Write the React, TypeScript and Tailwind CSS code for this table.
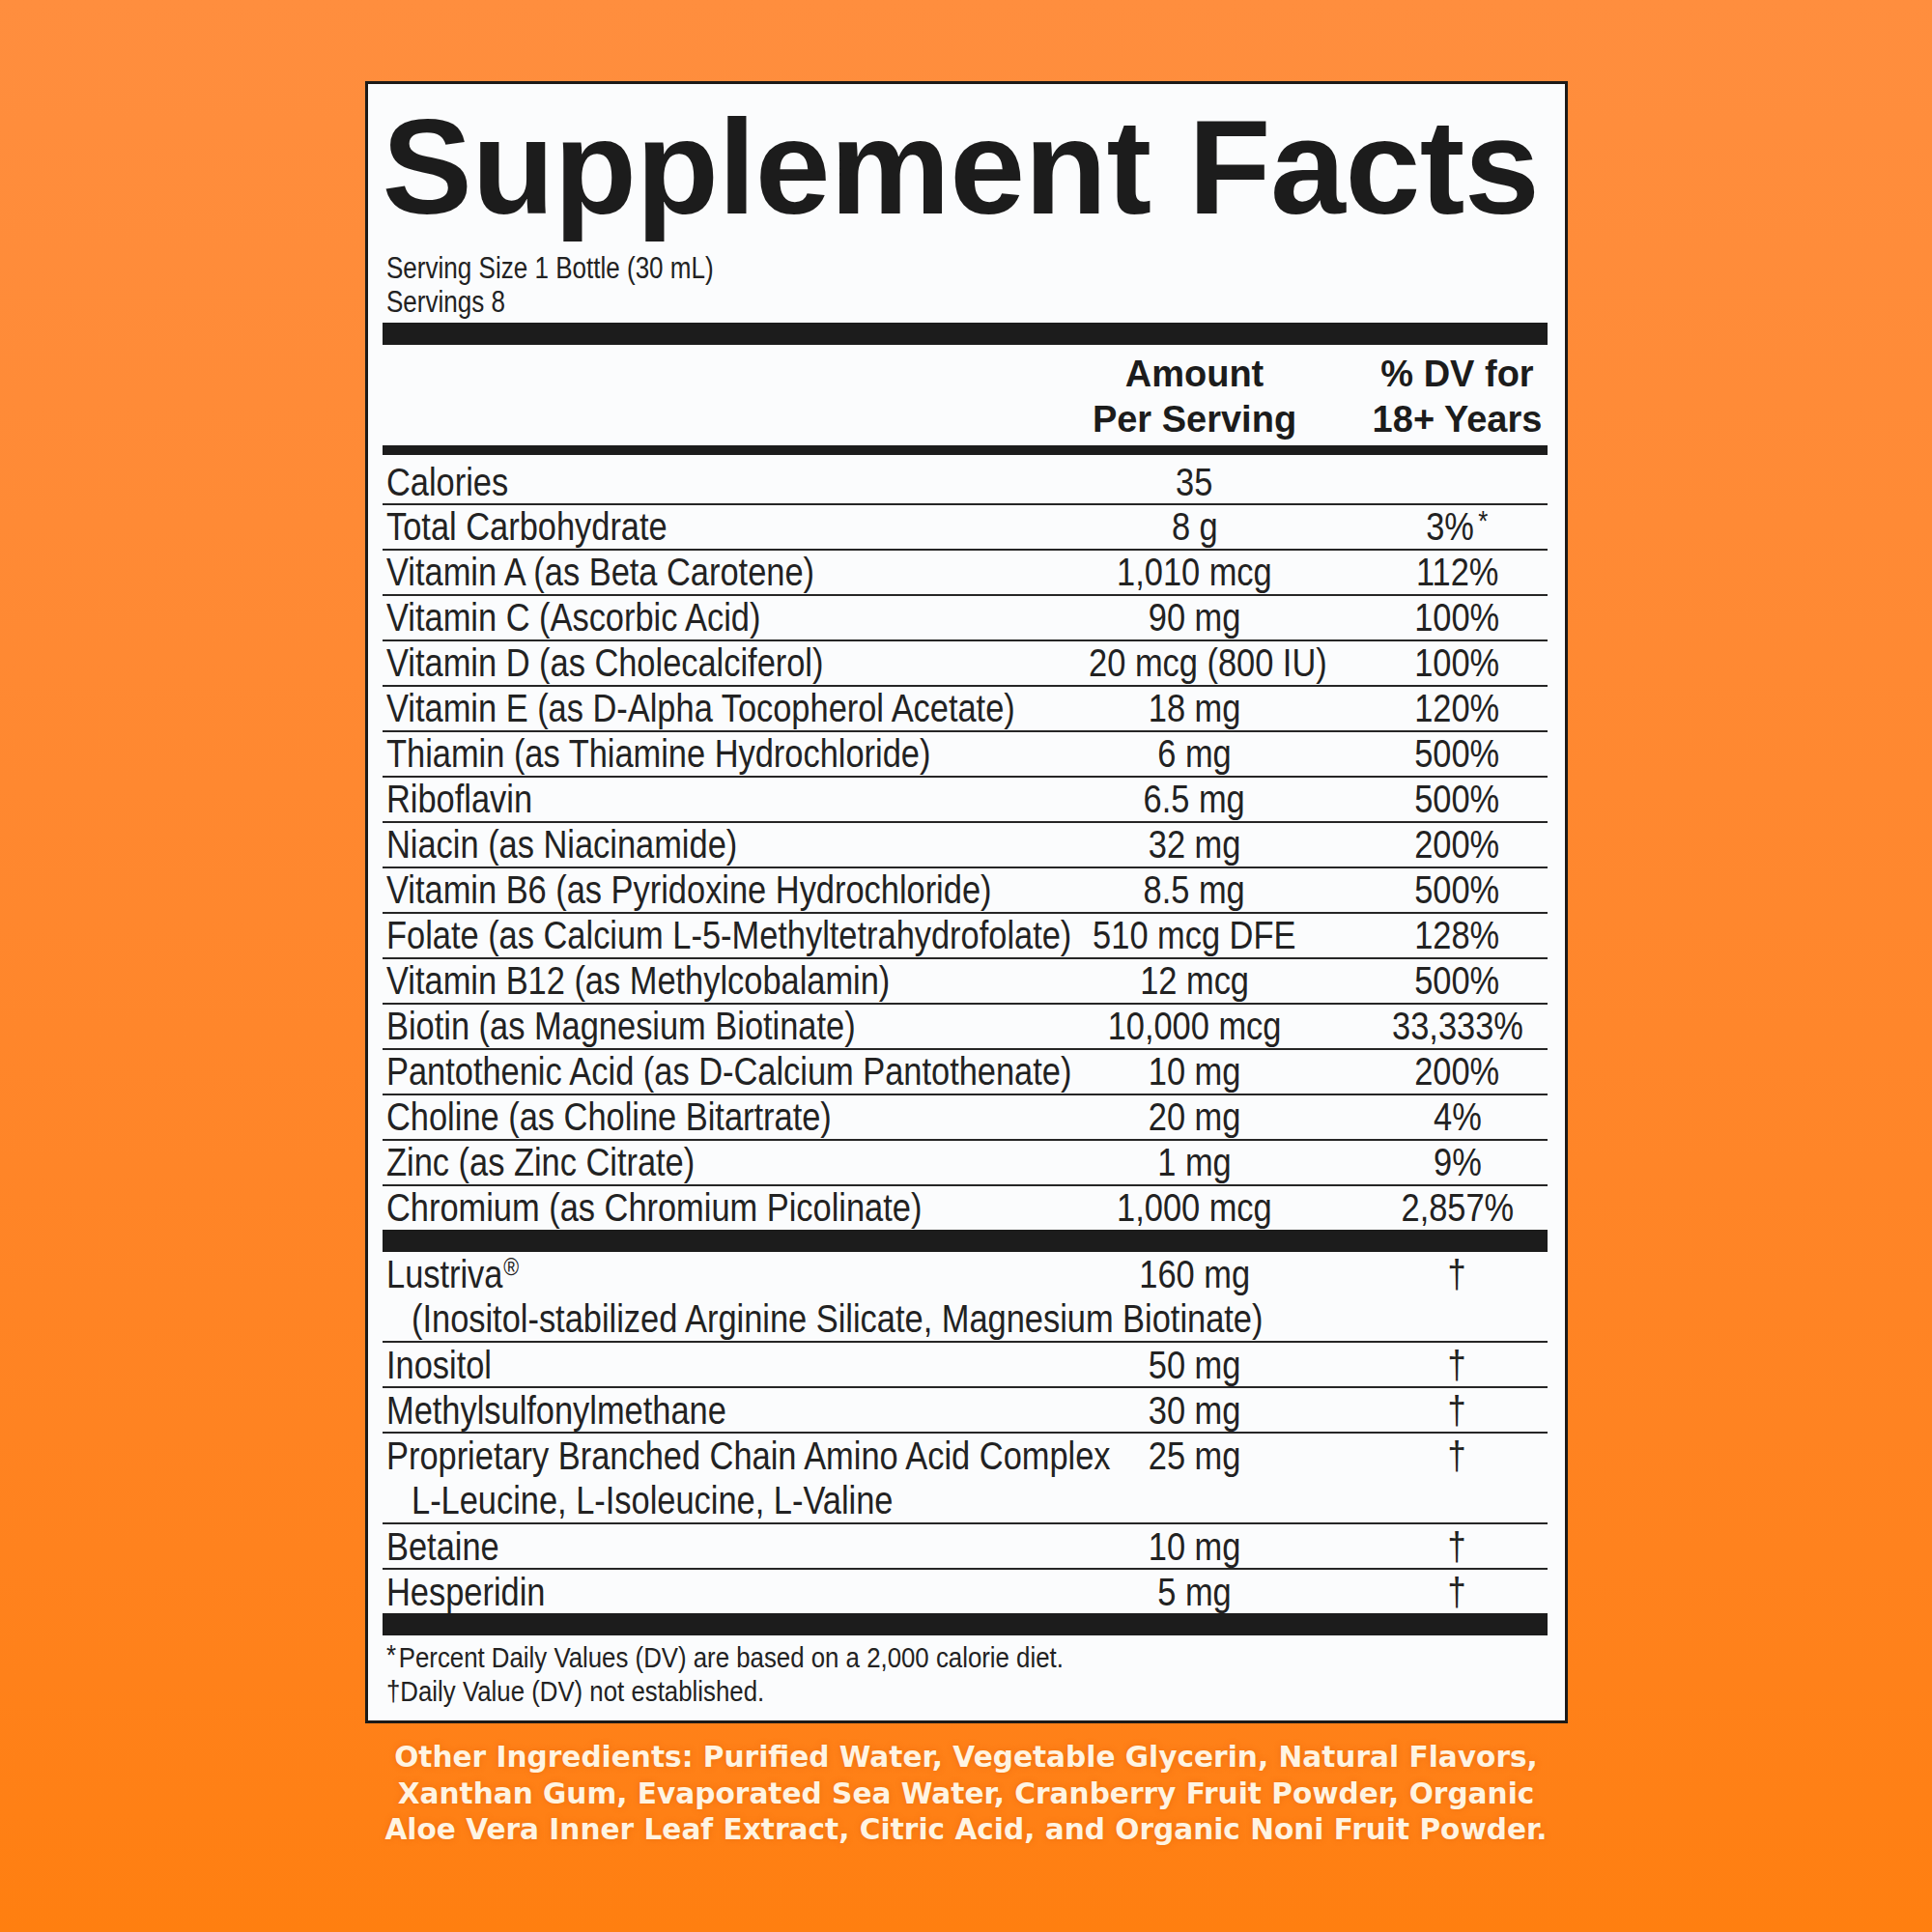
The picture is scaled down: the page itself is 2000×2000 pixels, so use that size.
import clsx from 'clsx';

const SANS = "font-['Liberation_Sans',Arial,sans-serif]";

// the label face is a condensed grotesque; squeeze Liberation Sans to match
function Sq({ children, left, k = 'row' }: { children: React.ReactNode; left?: boolean; k?: 'row' | 'small' | 'serving' }) {
  return (
    <span
      className={clsx(
        'inline-block',
        left ? 'origin-left' : 'origin-center',
        k === 'row' && 'scale-x-[0.86]',
        k === 'small' && 'scale-x-[0.89]',
        k === 'serving' && 'scale-x-[0.84]',
      )}
    >
      {children}
    </span>
  );
}

const VITAMINS: [string, string, React.ReactNode][] = [
  ['Calories', '35', ''],
  ['Total Carbohydrate', '8 g', <>3%<span className="ml-[5px] align-[10px] text-[30px] leading-none">*</span></>],
  ['Vitamin A (as Beta Carotene)', '1,010 mcg', '112%'],
  ['Vitamin C (Ascorbic Acid)', '90 mg', '100%'],
  ['Vitamin D (as Cholecalciferol)', '20 mcg (800 IU)', '100%'],
  ['Vitamin E (as D-Alpha Tocopherol Acetate)', '18 mg', '120%'],
  ['Thiamin (as Thiamine Hydrochloride)', '6 mg', '500%'],
  ['Riboflavin', '6.5 mg', '500%'],
  ['Niacin (as Niacinamide)', '32 mg', '200%'],
  ['Vitamin B6 (as Pyridoxine Hydrochloride)', '8.5 mg', '500%'],
  ['Folate (as Calcium L-5-Methyltetrahydrofolate)', '510 mcg DFE', '128%'],
  ['Vitamin B12 (as Methylcobalamin)', '12 mcg', '500%'],
  ['Biotin (as Magnesium Biotinate)', '10,000 mcg', '33,333%'],
  ['Pantothenic Acid (as D-Calcium Pantothenate)', '10 mg', '200%'],
  ['Choline (as Choline Bitartrate)', '20 mg', '4%'],
  ['Zinc (as Zinc Citrate)', '1 mg', '9%'],
  ['Chromium (as Chromium Picolinate)', '1,000 mcg', '2,857%'],
];

const OTHERS: { name: React.ReactNode; amount: string; sub?: string }[] = [
  {
    name: <>Lustriva<span className="ml-[1px] align-[13px] text-[25px] leading-none">®</span></>,
    amount: '160 mg',
    sub: '(Inositol-stabilized Arginine Silicate, Magnesium Biotinate)',
  },
  { name: 'Inositol', amount: '50 mg' },
  { name: 'Methylsulfonylmethane', amount: '30 mg' },
  {
    name: 'Proprietary Branched Chain Amino Acid Complex',
    amount: '25 mg',
    sub: 'L-Leucine, L-Isoleucine, L-Valine',
  },
  { name: 'Betaine', amount: '10 mg' },
  { name: 'Hesperidin', amount: '5 mg' },
];

function Cols({ name, amount, dv, className }: { name: React.ReactNode; amount: React.ReactNode; dv: React.ReactNode; className?: string }) {
  return (
    <div className={clsx('flex', className)}>
      <div className="w-[711px] shrink-0 whitespace-nowrap pl-[4px]">{name}</div>
      <div className="w-[260px] shrink-0 whitespace-nowrap text-center">{amount}</div>
      <div className="ml-[49px] w-[186px] shrink-0 whitespace-nowrap text-center">{dv}</div>
    </div>
  );
}

const Bar = ({ h }: { h: string }) => <div className={clsx('bg-[#1c1c1c]', h)} />;

export default function App() {
  return (
    <div className="min-h-[2000px] w-full bg-linear-to-b from-[#ff8e3e] to-[#ff7f10] pt-[84px]">
      <div className="mx-auto w-[1245px] border-[3px] border-[#1c1a18] bg-[#fbfcfd] pl-[15px] pr-[18px] pt-[16px] pb-[12px] text-[#222]">
        <h1 className={clsx(SANS, 'text-[140px] leading-[139px] font-bold tracking-[-0.5px] text-[#1c1c1c]')}>
          Supplement Facts
        </h1>

        <div className={clsx(SANS, 'mt-[18px] whitespace-nowrap pl-[4px] text-[31px] leading-[35px]')}>
          <div><Sq left k="serving">Serving Size 1 Bottle (30 mL)</Sq></div>
          <div><Sq left k="serving">Servings 8</Sq></div>
        </div>

        <div className="mt-[4px]"><Bar h="h-[23px]" /></div>

        <Cols
          className={clsx(SANS, 'pt-[7px] pb-[3px] text-[38px] leading-[47px] font-bold text-[#1c1c1c]')}
          name=""
          amount={<>Amount<br />Per Serving</>}
          dv={<>% DV for<br />18+ Years</>}
        />
        <Bar h="h-[10px]" />

        <div className={clsx(SANS, 'text-[40px]')}>
          {VITAMINS.map(([name, amount, dv], i) => (
            <Cols
              key={name}
              name={<Sq left>{name}</Sq>}
              amount={<Sq>{amount}</Sq>}
              dv={<Sq>{dv}</Sq>}
              className={clsx(
                'leading-[45px]',
                i === 0 && 'h-[52px] pt-[6px]',
                i > 0 && i < VITAMINS.length - 1 && 'h-[47px]',
                i === VITAMINS.length - 1 ? 'h-[45px]' : 'border-b-2 border-[#262626]',
              )}
            />
          ))}
        </div>

        <Bar h="h-[23px]" />

        <div className={clsx(SANS, 'text-[40px]')}>
          {OTHERS.map((row, i) => (
            <div
              key={row.amount}
              className={clsx(
                'leading-[46px]',
                row.sub ? 'h-[94px]' : i === OTHERS.length - 1 ? 'h-[45px]' : 'h-[47px]',
                i < OTHERS.length - 1 && 'border-b-2 border-[#262626]',
              )}
            >
              <Cols name={<Sq left>{row.name}</Sq>} amount={<Sq>{row.amount}</Sq>} dv={<Sq>†</Sq>} />
              {row.sub && <div className="whitespace-nowrap pl-[30px]"><Sq left>{row.sub}</Sq></div>}
            </div>
          ))}
        </div>

        <Bar h="h-[23px]" />

        <div className={clsx(SANS, 'whitespace-nowrap pt-[3px] pl-[4px] text-[29px] leading-[35px]')}>
          <div><Sq left k="small"><span className="mr-[3px] align-[3px]">*</span>Percent Daily Values (DV) are based on a 2,000 calorie diet.</Sq></div>
          <div><Sq left k="small">†Daily Value (DV) not established.</Sq></div>
        </div>
      </div>

      <p className="mt-[17px] text-center font-['DejaVu_Sans',sans-serif] text-[29.6px] leading-[37.5px] font-bold text-[#fff4e2] [text-shadow:0_0_6px_rgba(200,80,0,0.35)]">
        Other Ingredients: Purified Water, Vegetable Glycerin, Natural Flavors,<br />
        Xanthan Gum, Evaporated Sea Water, Cranberry Fruit Powder, Organic<br />
        Aloe Vera Inner Leaf Extract, Citric Acid, and Organic Noni Fruit Powder.
      </p>
    </div>
  );
}
